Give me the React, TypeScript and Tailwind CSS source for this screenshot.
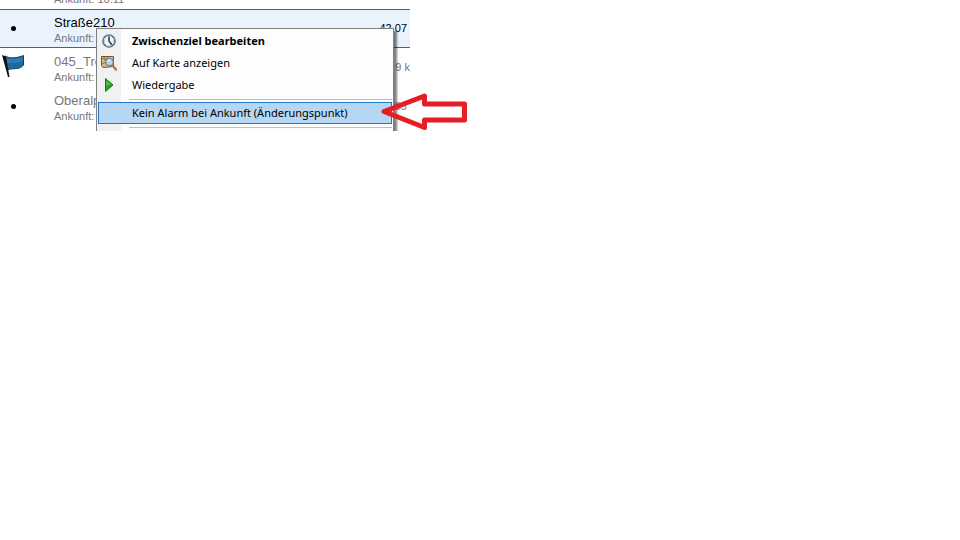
import type { ReactNode } from "react";

type Stop = {
  name: string;
  distance: string;
  icon: "dot" | "flag";
  selected?: boolean;
};

const stops: Stop[] = [
  { name: "Straße210", distance: "42,07", icon: "dot", selected: true },
  { name: "045_Tremola", distance: "9 k", icon: "flag" },
  { name: "Oberalppass", distance: "65", icon: "dot" },
];

const Flag = () => (
  <svg width="24" height="28" viewBox="0 0 24 28" aria-hidden="true">
    <path d="M5 3C10 6 17 5 23.500 2.500V12C20 17 14 15 8 16.500Z" fill="#1d699f" stroke="#153f5e" />
    <path d="M6 4.500C11 7 17 6 22.500 4V8C17 11 12 9 7.500 10.500Z" fill="#2c7db4" />
    <path d="M2 2L6 3.500L9.500 24L8 24Z" fill="#111" />
  </svg>
);

const Clock = () => (
  <svg width="16" height="16" viewBox="0 0 16 16" aria-hidden="true">
    <circle cx="8" cy="8" r="6" fill="#eef3f5" stroke="#64788a" strokeWidth="1.700" />
    <path d="M8 2.500v1.500M8 12v1.500M2.500 8H4M12 8h1.500M4 4l1 1M12 4l-1 1M4 12l1-1" stroke="#8d9ba5" strokeWidth="1" />
    <path d="M8 3.500V8l3 4" fill="none" stroke="#2c4b68" strokeWidth="1.700" />
  </svg>
);

const MapSearch = () => (
  <svg width="16" height="16" viewBox="0 0 16 16" aria-hidden="true">
    <path d="M0.500 1.500H12.500V11.500L2 12.500L0.500 10.500Z" fill="#d9bd88" stroke="#6b5437" />
    <path d="M1 3l3 2 3-3M1 9l4-2 2 4M3 2l2 3v4" fill="none" stroke="#8d6a3c" />
    <path d="M11.500 10.500L15 14.500" stroke="#a77b54" strokeWidth="2.500" strokeLinecap="round" />
    <circle cx="8.500" cy="7" r="3.700" fill="#b9d7ea" stroke="#778a98" strokeWidth="1.300" />
    <path d="M6.500 6.500Q7 5 9 5" fill="none" stroke="#fff" />
  </svg>
);

const Play = () => (
  <svg width="16" height="16" viewBox="0 0 16 16" aria-hidden="true">
    <path d="M4.500 1.500L12 8L4.500 14.500Z" fill="#28a51e" stroke="#167c10" />
    <path d="M5.500 4L9.500 7.500L5.500 8Z" fill="#61cb4d" />
  </svg>
);

const StopRow = ({ name, distance, icon, selected }: Stop) => (
  <li
    className={
      selected
        ? "flex h-[39px] border-y border-[#1b74a8] bg-[#eaf3fd] text-black"
        : "flex h-[39px] border-y border-transparent text-[#777]"
    }
  >
    <div className="flex w-[54px] shrink-0 items-center pb-px">
      {icon === "flag" ? (
        <Flag />
      ) : (
        <span className="ml-[11px] size-[5px] rounded-full bg-black" />
      )}
    </div>
    <div className="grow pt-[5px]">
      <p className="text-[13px] leading-4">{name}</p>
      <p className="text-[11px] leading-[14px] text-[#777]">Ankunft: 10:11</p>
    </div>
    <p className={icon === "flag" ? "self-center text-[11px]" : "self-center pr-[3px] text-[11px]"}>
      {distance}
    </p>
  </li>
);

const MenuItem = ({ icon, children, className = "" }: { icon?: ReactNode; children: ReactNode; className?: string }) => (
  <button
    type="button"
    role="menuitem"
    className={`flex h-[22px] w-full items-center border pr-2 text-left ${className || "border-transparent"}`}
  >
    <span className="flex w-[33px] shrink-0 pl-[2px]">{icon}</span>
    <span className="whitespace-nowrap">{children}</span>
  </button>
);

const Separator = () => (
  <div role="separator" className="flex h-[6px] items-center pl-[31px]">
    <span className="h-px w-full bg-[#bdbdbd]" />
  </div>
);

const ContextMenu = () => (
  <div
    role="menu"
    className="absolute top-[28px] left-[96px] w-[298px] border border-[#808080] bg-[#fdfdfd] bg-linear-to-r from-[#f1f1f1] from-[24px] to-[#fdfdfd] to-[24px] p-px font-['Noto_Sans','Open_Sans',sans-serif] text-[11px] text-black shadow-[3px_3px_2px_#00000080]"
  >
    <MenuItem icon={<Clock />} className="border-transparent font-bold">
      Zwischenziel bearbeiten
    </MenuItem>
    <MenuItem icon={<MapSearch />}>Auf Karte anzeigen</MenuItem>
    <MenuItem icon={<Play />}>Wiedergabe</MenuItem>
    <Separator />
    <MenuItem className="border-[#1f78c8] bg-[#b5d7f3]">
      Kein Alarm bei Ankunft (Änderungspunkt)
    </MenuItem>
    <Separator />
  </div>
);

const Arrow = () => (
  <svg className="absolute top-[92px] left-[380px]" width="90" height="39" viewBox="0 0 90 39" aria-hidden="true">
    <path
      d="M4 19.500L44.500 4V12H84.500V28H44.500V35.500Z"
      fill="none"
      stroke="#e71d25"
      strokeWidth="5"
      strokeLinejoin="round"
    />
  </svg>
);

export default function App() {
  return (
    <main className="min-h-screen bg-white font-['Liberation_Sans',Arial,sans-serif]">
      <div className="relative h-[131px] overflow-hidden">
        <ul className="max-w-[410px]">
          <li className="flex h-[9px] items-end overflow-hidden pl-[54px] text-[11px] leading-4 text-[#777]">
            <p className="pb-[2px]">Ankunft: 10:11</p>
          </li>
          {stops.map((stop) => (
            <StopRow key={stop.name} {...stop} />
          ))}
        </ul>
        <ContextMenu />
        <Arrow />
      </div>
    </main>
  );
}
